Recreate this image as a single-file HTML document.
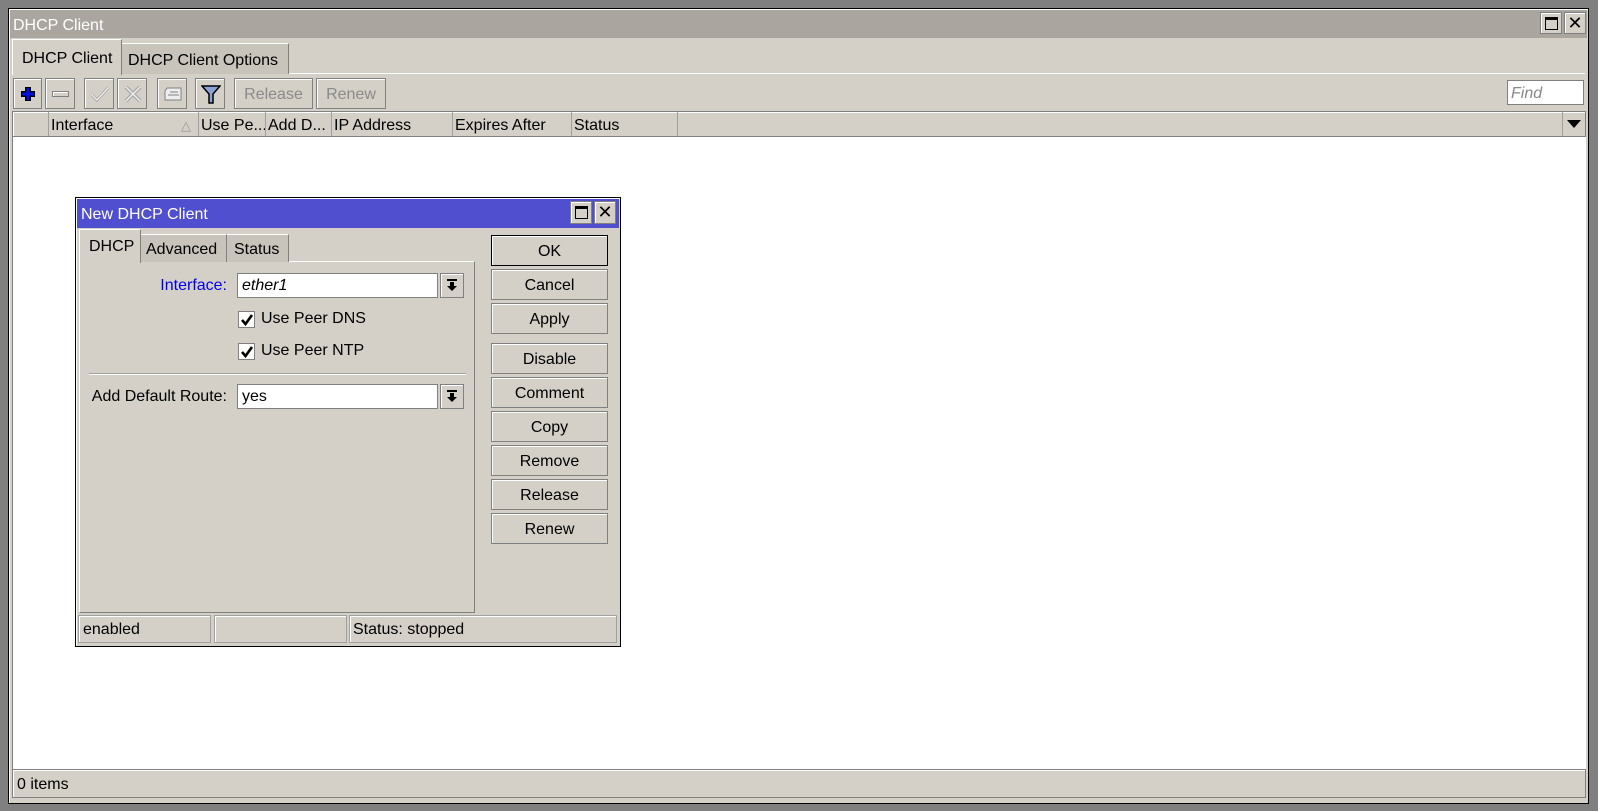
<!DOCTYPE html>
<html><head><meta charset="utf-8"><style>
*{box-sizing:border-box;margin:0;padding:0}
body{width:1598px;height:811px;background:#808080;position:relative;overflow:hidden;font-family:"Liberation Sans","DejaVu Sans",sans-serif;font-size:16px;color:#000}
.a{position:absolute}
.btn{position:absolute;background:#d4d0c8;border:1px solid #808080;box-shadow:inset 1px 1px 0 #fff;text-align:center}
.tb{position:absolute;top:78px;height:31px;background:#d4d0c8;border:1px solid #808080;box-shadow:inset 1px 1px 0 #fff}
.hd{position:absolute;top:112px;height:24px;border-right:1px solid #a0a0a0;padding-left:2px;line-height:27px;white-space:nowrap;overflow:hidden}
.db{position:absolute;left:491px;width:117px;height:31px;line-height:31px;background:#d4d0c8;border:1px solid #808080;box-shadow:inset 1px 1px 0 #fff;text-align:center}
.inp{position:absolute;background:#fff;border:1px solid #808080;padding-left:4px;line-height:24px}
.dd{position:absolute;width:24px;height:25px;background:#d4d0c8;border:1px solid #808080;box-shadow:inset 1px 1px 0 #fff}
.cb{position:absolute;width:17px;height:17px;background:#fff;border:1px solid #808080}
</style></head><body>
<div class="a" style="left:8px;top:8px;width:1581px;height:796px;background:#d4d0c8;border:1px solid #000;box-shadow:inset 1px 1px 0 #fff"></div>
<div class="a" style="left:10px;top:10px;width:1577px;height:28px;background:#aaa69f;color:#fff;line-height:31px;padding-left:3px">DHCP Client</div>
<div class="btn" style="left:1540px;top:12px;width:22px;height:22px"><div class="a" style="left:4px;top:4px;width:13px;height:13px;border:1.5px solid #000;border-top-width:3px"></div></div>
<div class="btn" style="left:1564px;top:12px;width:22px;height:22px;line-height:20px;font-size:18px">✕</div>
<div class="a" style="left:12px;top:73px;width:1573px;height:1px;background:#fff"></div>
<div class="a" style="left:12px;top:39px;width:110px;height:36px;background:#d4d0c8;border-left:1px solid #fff;border-top:1px solid #fff;border-right:1px solid #808080;line-height:37px;padding-left:9px">DHCP Client</div>
<div class="a" style="left:122px;top:43px;width:167px;height:31px;background:#c8c4bc;border-top:1px solid #fff;border-right:1px solid #808080;line-height:34px;padding-left:6px">DHCP Client Options</div>
<div class="tb" style="left:13px;width:29px"><svg class="a" style="left:5px;top:6px" width="18" height="18"><path d="M9 2V16M2 9H16" stroke="#000" stroke-width="6"/><path d="M9 3V15M3 9H15" stroke="#0010e0" stroke-width="3"/></svg></div>
<div class="tb" style="left:45px;width:30px"><div class="a" style="left:6px;top:12px;width:17px;height:6px;border:1px solid #808080;box-shadow:inset 1px 1px 0 #fff"></div></div>
<div class="tb" style="left:84px;width:30px"><svg class="a" style="left:5px;top:6px" width="20" height="18"><path d="M2 10L7 15L18 3" stroke="#a8a8a8" stroke-width="3" fill="none"/><path d="M2 10L7 15L18 3" stroke="#fff" stroke-width="1" fill="none"/></svg></div>
<div class="tb" style="left:117px;width:30px"><svg class="a" style="left:5px;top:6px" width="20" height="18"><path d="M3 2L17 16M17 2L3 16" stroke="#a8a8a8" stroke-width="4"/><path d="M3 2L17 16M17 2L3 16" stroke="#eee" stroke-width="1.5"/></svg></div>
<div class="tb" style="left:157px;width:30px"><svg class="a" style="left:5px;top:7px" width="20" height="16"><path d="M4 2H18V14H2V5Z" fill="#eee" stroke="#808080"/><path d="M7 6H15M5 9H16" stroke="#808080"/></svg></div>
<div class="tb" style="left:195px;width:30px"><svg class="a" style="left:5px;top:5px" width="20" height="21"><path d="M1 2H19L12 10V19H8V10Z" fill="#8ba4d8" stroke="#000" stroke-width="1.5"/></svg></div>
<div class="tb" style="left:234px;width:79px;color:#8a8a8a;text-align:center;line-height:31px">Release</div>
<div class="tb" style="left:316px;width:70px;color:#8a8a8a;text-align:center;line-height:31px">Renew</div>
<div class="inp" style="left:1507px;top:80px;width:77px;height:25px;color:#888;font-style:italic;padding-left:3px;line-height:26px">Find</div>
<div class="a" style="left:12px;top:111px;width:1574px;height:26px;background:#d4d0c8;border:1px solid #808080;box-shadow:inset 1px 1px 0 #fff"></div>
<div class="hd" style="left:13px;width:36px"></div>
<div class="hd" style="left:49px;width:150px">Interface<span class="a" style="left:132px;top:0;color:#999;font-size:13px">△</span></div>
<div class="hd" style="left:199px;width:67px">Use Pe...</div>
<div class="hd" style="left:266px;width:66px">Add D...</div>
<div class="hd" style="left:332px;width:121px">IP Address</div>
<div class="hd" style="left:453px;width:119px">Expires After</div>
<div class="hd" style="left:572px;width:106px">Status</div>
<div class="hd" style="left:1562px;width:23px;border-left:1px solid #a0a0a0;border-right:none"><svg class="a" style="left:4px;top:8px" width="14" height="8"><path d="M0 0H14L7 8Z"/></svg></div>
<div class="a" style="left:12px;top:137px;width:1574px;height:632px;background:#fff;border-left:1px solid #808080"></div>
<div class="a" style="left:12px;top:769px;width:1574px;height:29px;border:1px solid #808080;box-shadow:inset 1px 1px 0 #fff;line-height:29px;padding-left:4px">0 items</div>
<div class="a" style="left:75px;top:197px;width:546px;height:450px;background:#d4d0c8;border:1px solid #000;box-shadow:inset 1px 1px 0 #fff"></div>
<div class="a" style="left:77px;top:199px;width:542px;height:29px;background:#4f4fcf;color:#fff;line-height:31px;padding-left:4px">New DHCP Client</div>
<div class="btn" style="left:570px;top:201px;width:22px;height:23px"><div class="a" style="left:4px;top:4px;width:13px;height:13px;border:1.5px solid #000;border-top-width:3px"></div></div>
<div class="btn" style="left:594px;top:201px;width:22px;height:23px;line-height:21px;font-size:18px">✕</div>
<div class="a" style="left:79px;top:261px;width:396px;height:352px;border-top:1px solid #fff;border-left:1px solid #fff;border-right:1px solid #808080;border-bottom:1px solid #808080"></div>
<div class="a" style="left:79px;top:229px;width:62px;height:34px;background:#d4d0c8;border-left:1px solid #fff;border-top:1px solid #fff;border-right:1px solid #808080;line-height:34px;padding-left:9px">DHCP</div>
<div class="a" style="left:141px;top:234px;width:86px;height:28px;background:#c8c4bc;border-top:1px solid #fff;border-right:1px solid #808080;line-height:30px;padding-left:5px">Advanced</div>
<div class="a" style="left:227px;top:234px;width:62px;height:28px;background:#c8c4bc;border-top:1px solid #fff;border-right:1px solid #808080;line-height:30px;padding-left:7px">Status</div>
<div class="a" style="left:90px;top:272px;width:137px;text-align:right;color:#0000ee;line-height:28px">Interface:</div>
<div class="inp" style="left:237px;top:273px;width:201px;height:25px;font-style:italic">ether1</div>
<div class="dd" style="left:440px;top:273px"><svg class="a" style="left:5px;top:5px" width="12" height="13"><path d="M1 1H11" stroke="#000" stroke-width="2"/><path d="M4 3H8V7H11L6 12L1 7H4Z"/></svg></div>
<div class="cb" style="left:238px;top:311px"><svg class="a" style="left:1px;top:1px" width="14" height="14"><path d="M2 7L5.5 11L12 2" stroke="#000" stroke-width="2.6" fill="none"/></svg></div>
<div class="a" style="left:261px;top:307px;line-height:24px">Use Peer DNS</div>
<div class="cb" style="left:238px;top:343px"><svg class="a" style="left:1px;top:1px" width="14" height="14"><path d="M2 7L5.5 11L12 2" stroke="#000" stroke-width="2.6" fill="none"/></svg></div>
<div class="a" style="left:261px;top:339px;line-height:24px">Use Peer NTP</div>
<div class="a" style="left:89px;top:373px;width:377px;height:2px;border-top:1px solid #a0a0a0;border-bottom:1px solid #fff"></div>
<div class="a" style="left:80px;top:383px;width:147px;text-align:right;line-height:28px">Add Default Route:</div>
<div class="inp" style="left:237px;top:384px;width:201px;height:25px">yes</div>
<div class="dd" style="left:440px;top:384px"><svg class="a" style="left:5px;top:5px" width="12" height="13"><path d="M1 1H11" stroke="#000" stroke-width="2"/><path d="M4 3H8V7H11L6 12L1 7H4Z"/></svg></div>
<div class="db" style="top:235px;border-color:#000">OK</div>
<div class="db" style="top:269px">Cancel</div>
<div class="db" style="top:303px">Apply</div>
<div class="db" style="top:343px">Disable</div>
<div class="db" style="top:377px">Comment</div>
<div class="db" style="top:411px">Copy</div>
<div class="db" style="top:445px">Remove</div>
<div class="db" style="top:479px">Release</div>
<div class="db" style="top:513px">Renew</div>
<div class="a" style="left:78px;top:615px;width:133px;height:28px;border:1px solid #a0a0a0;box-shadow:inset 1px 1px 0 #fff;line-height:28px;padding-left:4px">enabled</div>
<div class="a" style="left:214px;top:615px;width:133px;height:28px;border:1px solid #a0a0a0;box-shadow:inset 1px 1px 0 #fff"></div>
<div class="a" style="left:349px;top:615px;width:268px;height:28px;border:1px solid #a0a0a0;box-shadow:inset 1px 1px 0 #fff;line-height:28px;padding-left:3px">Status: stopped</div>
</body></html>
